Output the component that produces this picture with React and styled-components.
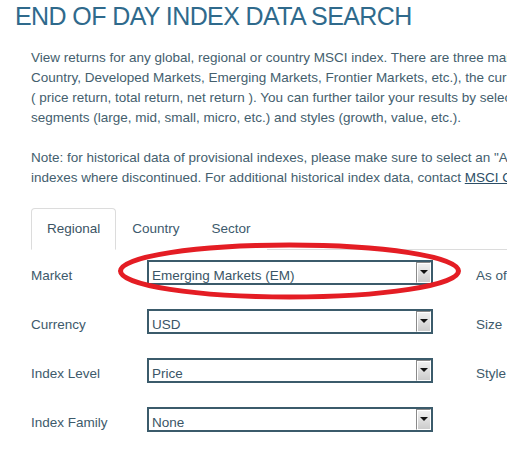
import React from 'react';
import styled, { createGlobalStyle } from 'styled-components';

const GlobalStyle = createGlobalStyle`
  html, body {
    margin: 0;
    padding: 0;
    background: #fff;
    overflow: hidden;
  }
  body {
    font-family: "Liberation Sans", Arial, sans-serif;
  }
`;

const Page = styled.div`
  position: relative;
  width: 900px;
  height: 455px;
  padding: 1px 0 0 15px;
  box-sizing: border-box;
`;

const Title = styled.h1`
  margin: 0;
  font-size: 25px;
  line-height: 30px;
  font-weight: 400;
  letter-spacing: -0.6px;
  color: #2f6a8c;
`;

const Content = styled.div`
  padding: 17px 0 0 16px;
`;

const Para = styled.p`
  margin: 0 0 20px;
  font-size: 13.5px;
  line-height: 20px;
  white-space: nowrap;
  color: #44606e;
`;

const TextLink = styled.a`
  color: #2c4e66;
  text-decoration: underline;
`;

const TabBar = styled.div`
  display: flex;
  border-bottom: 1px solid #dcdcdc;
  margin-top: 20px;
`;

const Tab = styled.div`
  height: 40px;
  line-height: 40px;
  padding: 0 15px;
  margin-bottom: -1px;
  font-size: 13.5px;
  color: ${(p) => (p.$active ? '#3b5364' : '#3d5a6d')};
  border: 1px solid ${(p) => (p.$active ? '#dcdcdc' : 'transparent')};
  border-bottom-color: ${(p) => (p.$active ? '#fff' : 'transparent')};
  border-radius: 4px 4px 0 0;
  background: #fff;
`;

const Form = styled.div`
  display: flex;
  flex-direction: column;
  gap: 24px;
  padding-top: 10px;
`;

const Row = styled.div`
  display: flex;
  align-items: baseline;
`;

const Label = styled.span`
  width: ${(p) => p.$width || 116}px;
  flex-shrink: 0;
  font-size: 13.5px;
  color: #3d5a6b;
`;

const Select = styled.div`
  display: flex;
  width: 286px;
  height: 25px;
  box-sizing: border-box;
  border: 2px solid #3b5b6b;
  background: #fff;
  margin-right: 43px;
  flex-shrink: 0;
  overflow: hidden;
`;

const SelectValue = styled.span`
  flex: 1;
  padding: 6px 0 0 3px;
  font-size: 13.5px;
  line-height: 15px;
  color: #3a5566;
`;

const ArrowButton = styled.span`
  width: 15px;
  box-sizing: border-box;
  display: flex;
  justify-content: center;
  padding-top: 7px;
  border: 1px solid #8a8a8a;
  border-right-color: #fff;
  border-bottom-color: #fff;
  box-shadow: inset 1px 1px 0 #fff;
  background: linear-gradient(#f2f2f2, #cccccc);
`;

const Arrow = styled.span`
  width: 0;
  height: 0;
  border-left: 4px solid transparent;
  border-right: 4px solid transparent;
  border-top: 4px solid #111;
`;

const Annotation = styled.svg`
  position: absolute;
  left: 0;
  top: 0;
  pointer-events: none;
`;

const rows = [
  { label: 'Market', value: 'Emerging Markets (EM)', side: 'As of' },
  { label: 'Currency', value: 'USD', side: 'Size' },
  { label: 'Index Level', value: 'Price', side: 'Style' },
  { label: 'Index Family', value: 'None', side: '' },
];

export default function App() {
  return (
    <Page>
      <GlobalStyle />
      <Title>END OF DAY INDEX DATA SEARCH</Title>
      <Content>
        <Para>
          View returns for any global, regional or country MSCI index. There are three main criteria to define your search: the market (e.g. All
          <br />
          Country, Developed Markets, Emerging Markets, Frontier Markets, etc.), the currency of the index and the index level
          <br />
          ( price return, total return, net return ). You can further tailor your results by selecting specific sizes or
          <br />
          segments (large, mid, small, micro, etc.) and styles (growth, value, etc.).
        </Para>
        <Para>
          Note: for historical data of provisional indexes, please make sure to select an "As of" date prior to the date the
          <br />
          indexes where discontinued. For additional historical index data, contact <TextLink>MSCI Client Service</TextLink>.
        </Para>
        <TabBar>
          <Tab $active>Regional</Tab>
          <Tab>Country</Tab>
          <Tab>Sector</Tab>
        </TabBar>
        <Form>
          {rows.map((r) => (
            <Row key={r.label}>
              <Label>{r.label}</Label>
              <Select>
                <SelectValue>{r.value}</SelectValue>
                <ArrowButton>
                  <Arrow />
                </ArrowButton>
              </Select>
              <Label $width={80}>{r.side}</Label>
            </Row>
          ))}
        </Form>
      </Content>
      <Annotation width="507" height="455">
        <ellipse cx="289.5" cy="271" rx="169" ry="26" fill="none" stroke="#e41d24" strokeWidth="5" />
      </Annotation>
    </Page>
  );
}
